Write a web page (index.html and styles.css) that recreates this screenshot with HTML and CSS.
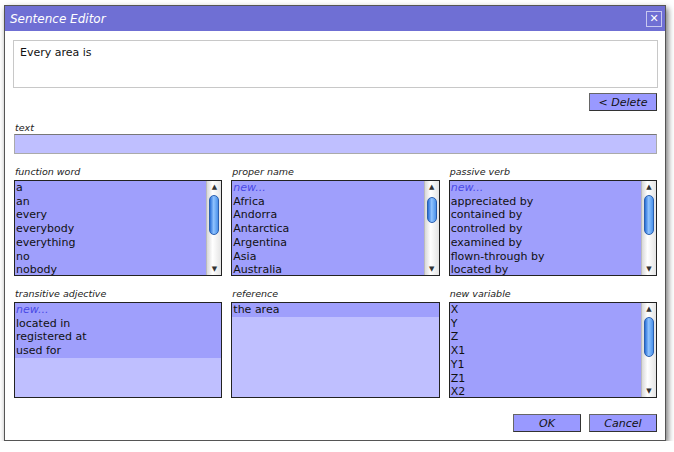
FILE: index.html
```html
<!DOCTYPE html>
<html lang="en">

<head>
    <meta charset="UTF-8">
    <title>Sentence Editor</title>
    <link rel="stylesheet" href="styles.css">
</head>

<body>

    <div class="dialog">
        <div class="titlebar">
            <span class="title">Sentence Editor</span>
            <span class="close">&#x2715;</span>
        </div>

        <div class="content">
            <div class="sentence">Every area is</div>

            <div class="delete-row">
                <button class="btn">&lt; Delete</button>
            </div>

            <div class="label">text</div>
            <div class="text-input"></div>

            <div class="lists">
                <!-- rangée du haut -->
                <div class="field">
                    <div class="label">function word</div>
                    <div class="listbox">
                        <div class="items">
                            <div class="item">a</div>
                            <div class="item">an</div>
                            <div class="item">every</div>
                            <div class="item">everybody</div>
                            <div class="item">everything</div>
                            <div class="item">no</div>
                            <div class="item">nobody</div>
                        </div>
                        <div class="scrollbar">
                            <span class="arrow">&#9650;</span>
                            <div class="track"><div class="thumb"></div></div>
                            <span class="arrow">&#9660;</span>
                        </div>
                    </div>
                </div>

                <div class="field">
                    <div class="label">proper name</div>
                    <div class="listbox">
                        <div class="items">
                            <div class="item new">new...</div>
                            <div class="item">Africa</div>
                            <div class="item">Andorra</div>
                            <div class="item">Antarctica</div>
                            <div class="item">Argentina</div>
                            <div class="item">Asia</div>
                            <div class="item">Australia</div>
                        </div>
                        <div class="scrollbar">
                            <span class="arrow">&#9650;</span>
                            <div class="track"><div class="thumb short"></div></div>
                            <span class="arrow">&#9660;</span>
                        </div>
                    </div>
                </div>

                <div class="field">
                    <div class="label">passive verb</div>
                    <div class="listbox">
                        <div class="items">
                            <div class="item new">new...</div>
                            <div class="item">appreciated by</div>
                            <div class="item">contained by</div>
                            <div class="item">controlled by</div>
                            <div class="item">examined by</div>
                            <div class="item">flown-through by</div>
                            <div class="item">located by</div>
                        </div>
                        <div class="scrollbar">
                            <span class="arrow">&#9650;</span>
                            <div class="track"><div class="thumb"></div></div>
                            <span class="arrow">&#9660;</span>
                        </div>
                    </div>
                </div>

                <!-- rangée du bas -->
                <div class="field">
                    <div class="label">transitive adjective</div>
                    <div class="listbox">
                        <div class="items">
                            <div class="item new">new...</div>
                            <div class="item">located in</div>
                            <div class="item">registered at</div>
                            <div class="item">used for</div>
                        </div>
                    </div>
                </div>

                <div class="field">
                    <div class="label">reference</div>
                    <div class="listbox">
                        <div class="items">
                            <div class="item">the area</div>
                        </div>
                    </div>
                </div>

                <div class="field">
                    <div class="label">new variable</div>
                    <div class="listbox">
                        <div class="items">
                            <div class="item">X</div>
                            <div class="item">Y</div>
                            <div class="item">Z</div>
                            <div class="item">X1</div>
                            <div class="item">Y1</div>
                            <div class="item">Z1</div>
                            <div class="item">X2</div>
                        </div>
                        <div class="scrollbar">
                            <span class="arrow">&#9650;</span>
                            <div class="track"><div class="thumb"></div></div>
                            <span class="arrow">&#9660;</span>
                        </div>
                    </div>
                </div>
            </div>

            <div class="footer">
                <button class="btn">OK</button>
                <button class="btn">Cancel</button>
            </div>
        </div>
    </div>

</body>

</html>
```

FILE: styles.css
```css
/* Styles généraux */
* {
    margin: 0;
    padding: 0;
    box-sizing: border-box;
}

body {
    background-color: #ffffff;
    font-family: "DejaVu Sans", Verdana, sans-serif;
    font-size: 11px;
    color: #111;
}

/* Fenêtre */
.dialog {
    margin: 5px 0 0 4px;
    width: 662px;
    height: 436px;
    background-color: #fff;
    border: 1px solid #555;
    box-shadow: 2px 3px 6px rgba(0, 0, 0, 0.55);
    display: flex;
    flex-direction: column;
}

.titlebar {
    height: 25px;
    background-color: #6f6fd4;
    display: flex;
    align-items: center;
    justify-content: space-between;
    padding: 0 3px 0 5px;
}

.title {
    color: #fff;
    font-style: italic;
    font-size: 12px;
}

.close {
    width: 16px;
    height: 16px;
    border: 1px solid #c8c8f0;
    color: #fff;
    font-size: 11px;
    font-weight: bold;
    display: flex;
    align-items: center;
    justify-content: center;
}

.content {
    padding: 9px 7px 0 8px;
    display: flex;
    flex-direction: column;
}

.sentence {
    height: 48px;
    border: 1px solid #c8c8c8;
    padding: 5px 6px;
    font-size: 11px;
}

.delete-row {
    display: flex;
    justify-content: flex-end;
    padding: 5px 1px 0 0;
}

/* Boutons */
.btn {
    width: 68px;
    height: 18px;
    background-color: #9999ff;
    border: 1px solid #333;
    border-top-color: #666;
    border-left-color: #666;
    font-family: "DejaVu Sans", Verdana, sans-serif;
    font-style: italic;
    font-size: 11px;
    color: #111;
}

.label {
    font-style: italic;
    font-size: 9.5px;
    color: #222;
    line-height: 11px;
}

.content > .label {
    margin: 11px 0 1px 2px;
}

.text-input {
    height: 20px;
    margin: 0 1px 0 1px;
    background-color: #bfbfff;
    border: 1px solid #aaa;
    border-top-color: #777;
}

/* Listes */
.lists {
    display: grid;
    grid-template-columns: repeat(3, 1fr);
    column-gap: 9px;
    row-gap: 12px;
    margin: 12px 1px 0 1px;
}

.field .label {
    margin: 0 0 3px 1px;
}

.listbox {
    height: 96px;
    border: 1px solid #222;
    background-color: #bfbfff;
    display: flex;
    overflow: hidden;
}

.items {
    flex: 1;
}

.item {
    background-color: #9f9ffc;
    line-height: 13.7px;
    padding-left: 1px;
    white-space: nowrap;
}

.item.new {
    color: #4a4ae6;
    font-style: italic;
}

.listbox:has(.scrollbar) {
    background-color: #9f9ffc;
}

/* Barre de défilement façon Aqua */
.scrollbar {
    width: 15px;
    background: linear-gradient(to right, #d8d8d8, #ffffff 40%, #e4e4e4);
    border-left: 1px solid #bbb;
    display: flex;
    flex-direction: column;
    align-items: center;
}

.arrow {
    font-size: 7px;
    color: #333;
    line-height: 12px;
    height: 12px;
}

.track {
    flex: 1;
    width: 100%;
    padding: 2px 2px;
}

.thumb {
    height: 40px;
    border-radius: 6px;
    background: linear-gradient(to right, #2a6fd6, #8fc3ff 45%, #4b92ea);
    border: 1px solid #2a5fb0;
}

.thumb.short {
    height: 26px;
    margin-top: 2px;
}

.footer {
    display: flex;
    justify-content: flex-end;
    gap: 8px;
    margin: 16px 1px 0 0;
}
```
